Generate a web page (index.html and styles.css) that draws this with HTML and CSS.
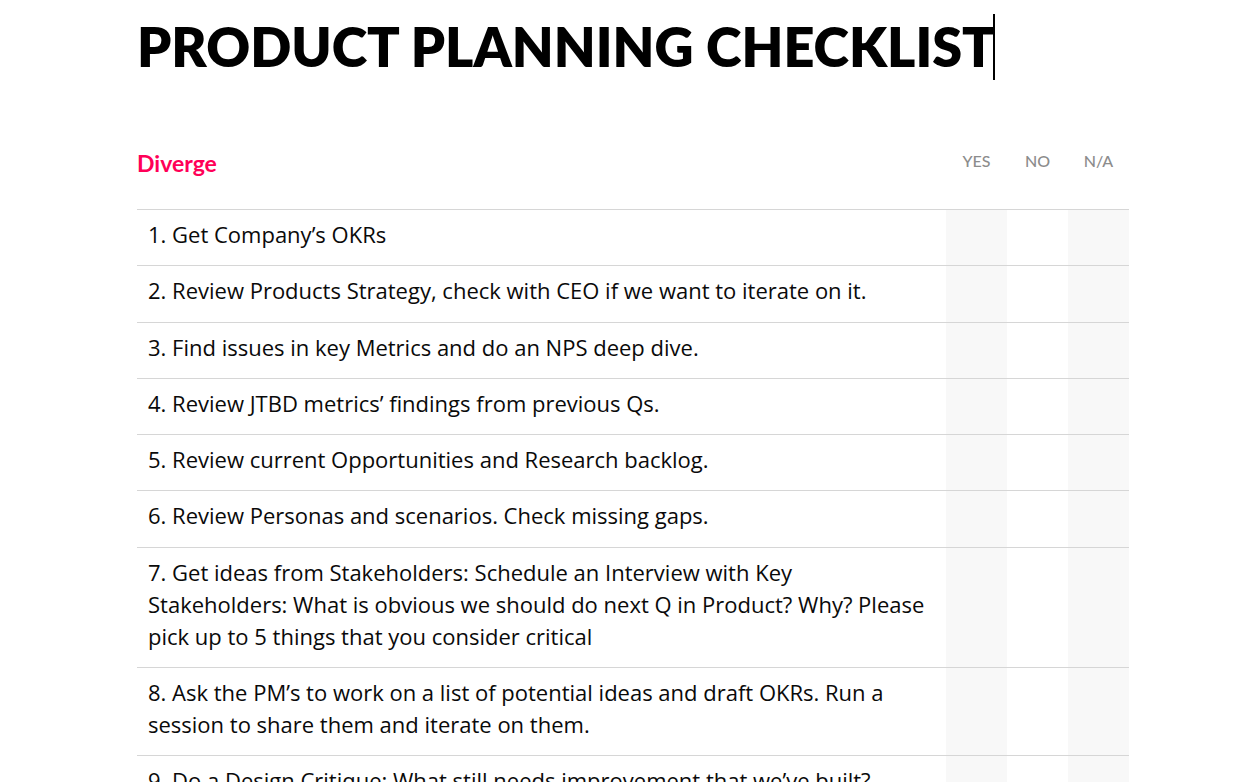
FILE: index.html
```html
<!DOCTYPE html>
<html lang="en">
<head>
<meta charset="utf-8">
<title>Product Planning Checklist</title>
<link rel="stylesheet" href="styles.css">
</head>
<body>
<main class="page">
  <h1 class="title">PRODUCT PLANNING CHECKLIST<span class="caret"></span></h1>
  <table class="checklist">
    <colgroup>
      <col class="col-item">
      <col class="col-check">
      <col class="col-check">
      <col class="col-check">
    </colgroup>
    <thead>
      <tr>
        <th class="section">Diverge</th>
        <th class="opt">YES</th>
        <th class="opt">NO</th>
        <th class="opt">N/A</th>
      </tr>
    </thead>
    <tbody>
      <tr><td class="item">1. Get Company’s OKRs</td><td class="box shade"></td><td class="box"></td><td class="box shade"></td></tr>
      <tr><td class="item">2. Review Products Strategy, check with CEO if we want to iterate on it.</td><td class="box shade"></td><td class="box"></td><td class="box shade"></td></tr>
      <tr><td class="item">3. Find issues in key Metrics and do an NPS deep dive.</td><td class="box shade"></td><td class="box"></td><td class="box shade"></td></tr>
      <tr><td class="item">4. Review JTBD metrics’ findings from previous Qs.</td><td class="box shade"></td><td class="box"></td><td class="box shade"></td></tr>
      <tr><td class="item">5. Review current Opportunities and Research backlog.</td><td class="box shade"></td><td class="box"></td><td class="box shade"></td></tr>
      <tr><td class="item">6. Review Personas and scenarios. Check missing gaps.</td><td class="box shade"></td><td class="box"></td><td class="box shade"></td></tr>
      <tr><td class="item">7. Get ideas from Stakeholders: Schedule an Interview with Key Stakeholders: What is obvious we should do next Q in Product? Why? Please pick up to 5 things that you consider critical</td><td class="box shade"></td><td class="box"></td><td class="box shade"></td></tr>
      <tr><td class="item">8. Ask the PM’s to work on a list of potential ideas and draft OKRs. Run a session to share them and iterate on them.</td><td class="box shade"></td><td class="box"></td><td class="box shade"></td></tr>
      <tr><td class="item">9. Do a Design Critique: What still needs improvement that we’ve built?</td><td class="box shade"></td><td class="box"></td><td class="box shade"></td></tr>
    </tbody>
  </table>
</main>
</body>
</html>
```
FILE: styles.css
```css
html, body {
  margin: 0;
  padding: 0;
  background: #ffffff;
}

body {
  font-family: "Open Sans", "Noto Sans", "Liberation Sans", sans-serif;
  color: #0a0a0a;
}

.page {
  margin-left: 137px;
  width: 992px;
}

.title {
  margin: 14px 0 0;
  font-family: Lato, "Open Sans", sans-serif;
  font-size: 54px;
  line-height: 66px;
  font-weight: 800;
  color: #000000;
  white-space: nowrap;
}

.caret {
  display: inline-block;
  width: 2px;
  height: 66px;
  margin-left: -2px;
  background: #000000;
  vertical-align: top;
}

.checklist {
  margin-top: 70px;
  width: 992px;
  border-collapse: collapse;
  table-layout: fixed;
}

.col-item { width: 809px; }
.col-check { width: 61px; }

.checklist th {
  height: 58px;
  padding: 0;
  vertical-align: top;
  text-align: left;
  border-bottom: 1px solid #d6d6d6;
}

.section {
  font-family: Lato, "Open Sans", sans-serif;
  font-size: 23px;
  line-height: 26px;
  font-weight: 700;
  color: #ff0057;
}

.checklist th.opt {
  padding-top: 1px;
  text-align: center;
  font-family: Lato, "Open Sans", sans-serif;
  font-size: 16px;
  line-height: 20px;
  font-weight: 500;
  color: #8c8c8c;
}

.checklist td {
  border-bottom: 1px solid #d6d6d6;
}

.item {
  padding: 8px 16px 15.3px 11px;
  font-size: 22px;
  line-height: 32px;
  color: #0a0a0a;
}

.box {
  padding: 0;
}

.shade {
  background: #f8f8f8;
}
```
